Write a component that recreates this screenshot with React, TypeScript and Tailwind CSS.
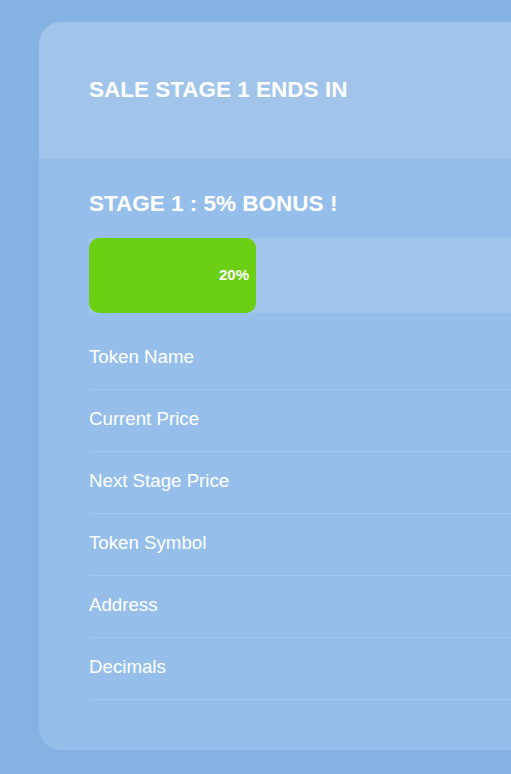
export default function App() {
  const rows = ["Token Name", "Current Price", "Next Stage Price", "Token Symbol", "Address", "Decimals"];
  const progress = 20;
  return (
    <div
      className="min-h-[774px] w-full overflow-hidden bg-[#84b2e3] pt-[22px] pl-[39px] pb-[24px]"
      style={{ fontFamily: '"Liberation Sans", Arial, sans-serif' }}
    >
      <div className="w-[520px] overflow-hidden rounded-l-[22px] bg-[#95bfea] text-white">
        <div className="flex h-[137px] items-center bg-[#a1c5ea] pl-[50px]">
          <h2 className="-mt-[1px] text-[22.5px] font-bold leading-[24px]">SALE STAGE 1 ENDS IN</h2>
        </div>
        <div className="pl-[50px] pt-[33px] pb-[50px]">
          <h3 className="text-[22.5px] font-bold leading-[24px]">STAGE 1 : 5% BONUS !</h3>
          <div className="mt-[22px] h-[75px] bg-[#a1c5ea]">
            <div
              className="flex h-full items-center justify-end rounded-[10px] bg-[#6bd013] pr-[7px]"
              style={{ width: `${progress * 8.35}px` }}
            >
              <span className="text-[15px] font-bold">{progress}%</span>
            </div>
          </div>
          <div className="mt-[15px]">
            {rows.map((r) => (
              <div key={r} className="border-b border-[#a2c8ef] pt-[18px] pb-[22px] text-[18.7px] leading-[21px]">
                {r}
              </div>
            ))}
          </div>
        </div>
      </div>
    </div>
  );
}
